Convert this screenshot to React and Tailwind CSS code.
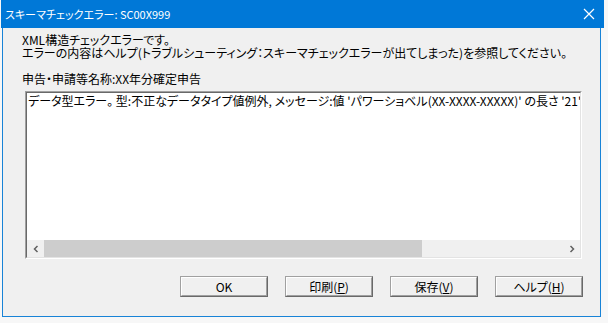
import React from 'react';

const font = "font-['Noto_Sans_CJK_JP','Noto_Sans',sans-serif] [font-feature-settings:'palt']";

const Button = ({ children }) => (
  <div className="w-[88px] h-[21px] border border-t-[#a0a0a0] border-l-[#a0a0a0] border-r-[#696969] border-b-[#696969] bg-[#f0f0f0]">
    <div className="w-full h-full border border-t-white border-l-white border-r-[#a0a0a0] border-b-[#a0a0a0] flex items-center justify-center text-[12px] leading-none text-black">
      {children}
    </div>
  </div>
);

const Mnemonic = ({ label, k }) => (
  <span>
    {label}(<span className="underline underline-offset-1">{k}</span>)
  </span>
);

export default function App() {
  return (
    <div className={`w-[608px] h-[323px] bg-[#f7f7f7] ${font}`}>
      <div className="ml-[2px] w-[599px] h-[317px] flex flex-col border border-[#1883d7] border-t-0">
        {/* title bar */}
        <div className="h-[28px] bg-[#0078d7] flex items-center justify-between pl-[4px] pr-[6px] -ml-[2px] w-[603px]">
          <span className="text-white text-[11px] leading-none">スキーマチェックエラー: SC00X999</span>
          <svg width="12" height="12" viewBox="0 0 12 12" className="mr-[3px]">
            <path d="M1 1 L11 11 M11 1 L1 11" stroke="white" strokeWidth="1.2" fill="none" />
          </svg>
        </div>

        <div className="flex-1 bg-[#f0f0f0] pl-[19px] pr-[17px] pt-[5px] flex flex-col text-[12px] text-black">
          <div className="leading-[13px]">
            <p>XML構造チェックエラーです。</p>
            <p>エラーの内容はヘルプ(トラブルシューティング：スキーマチェックエラーが出てしまった)を参照してください。</p>
          </div>
          <p className="mt-[14px] leading-[12px]">申告・申請等名称:XX年分確定申告</p>

          {/* text box */}
          <div className="mt-[6px] ml-[3px] w-[557px] h-[168px] border border-t-[#a0a0a0] border-l-[#a0a0a0] border-r-white border-b-white">
            <div className="w-full h-full border border-t-[#696969] border-l-[#696969] border-r-[#e3e3e3] border-b-[#e3e3e3] bg-white flex flex-col">
              <div className="flex-1 overflow-hidden whitespace-nowrap pl-[1px] pt-[1px] leading-[13px]">
                データ型エラー。 型:不正なデータタイプ値例外, メッセージ:値 'パワーショベル(XX-XXXX-XXXXX)' の長さ '21' は最大長 '20' を超えています。
              </div>
              <div className="h-[17px] bg-[#f0f0f0] flex items-center">
                <div className="w-[17px] h-full flex items-center justify-center">
                  <svg width="6" height="8" viewBox="0 0 6 8">
                    <path d="M4.5 1 L1.5 4 L4.5 7" stroke="#606060" strokeWidth="1.5" fill="none" />
                  </svg>
                </div>
                <div className="flex-1 h-full flex">
                  <div className="w-[378px] h-full bg-[#cdcdcd]" />
                </div>
                <div className="w-[17px] h-full flex items-center justify-center">
                  <svg width="6" height="8" viewBox="0 0 6 8">
                    <path d="M1.5 1 L4.5 4 L1.5 7" stroke="#606060" strokeWidth="1.5" fill="none" />
                  </svg>
                </div>
              </div>
            </div>
          </div>

          {/* buttons */}
          <div className="mt-[17px] flex justify-end gap-[17px]">
            <Button>OK</Button>
            <Button><Mnemonic label="印刷" k="P" /></Button>
            <Button><Mnemonic label="保存" k="V" /></Button>
            <Button><Mnemonic label="ヘルプ" k="H" /></Button>
          </div>
        </div>
      </div>
    </div>
  );
}
